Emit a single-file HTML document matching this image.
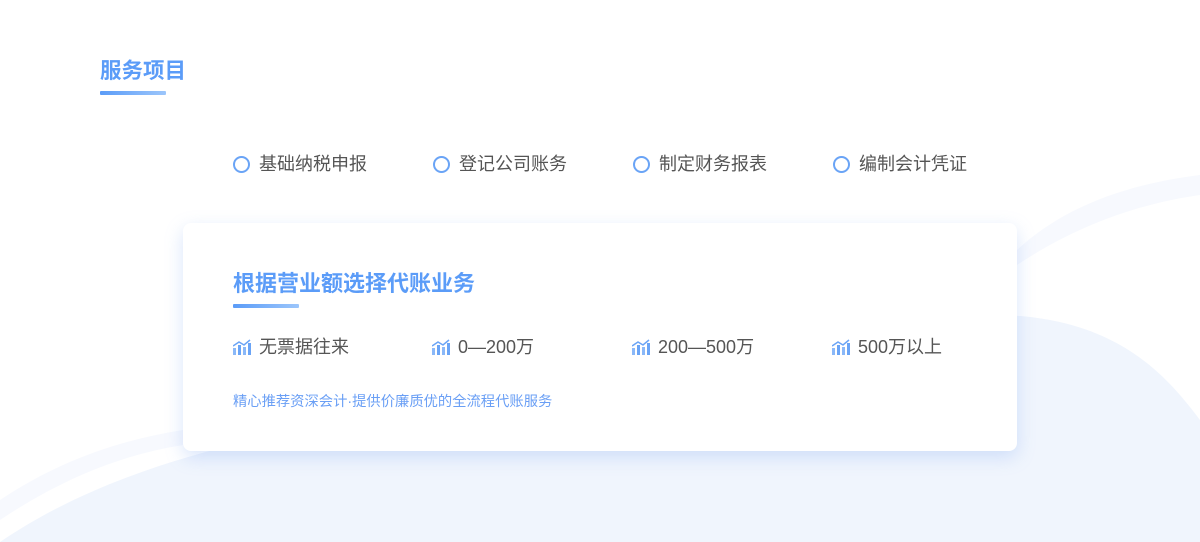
<!DOCTYPE html>
<html><head><meta charset="utf-8"><style>
*{margin:0;padding:0;box-sizing:border-box}
body{width:1200px;height:542px;overflow:hidden;background:#fff;font-family:"Liberation Sans","Noto Sans CJK SC",sans-serif;position:relative}
.bg{position:absolute;left:0;top:0}
.t1{position:absolute;left:100px;top:56px;font-size:21.5px;font-weight:bold;color:#5b9cf8;line-height:30px}
.u{position:absolute;height:4px;background:linear-gradient(90deg,#5b9cf8,#9cc6fb);border-radius:1px}
.it{position:absolute;top:152px;font-size:18px;color:#555;line-height:24px;display:flex;align-items:center}
.it i{width:17px;height:17px;border:2px solid #6aa4f6;border-radius:50%;margin-right:9px;display:inline-block}
.card{position:absolute;left:183px;top:223px;width:834px;height:228px;background:#fff;border-radius:8px;box-shadow:0 6px 18px rgba(120,160,240,.28)}
.t2{position:absolute;left:233px;top:269px;font-size:22px;font-weight:bold;color:#5b9cf8;line-height:30px}
.r{position:absolute;top:335px;font-size:18px;color:#555;line-height:24px;display:flex;align-items:center}
.r svg{margin-right:8px}
.s{position:absolute;left:233px;top:392px;font-size:14.3px;color:#6a9ff5;line-height:20px}
</style></head><body>
<svg class="bg" width="1200" height="542">
<path d="M0 542 C150 440 350 420 600 380 C800 345 950 300 1050 320 C1130 335 1170 380 1200 420 L1200 542Z" fill="#f0f5fd"/>
<path d="M1017 250 C1060 210 1120 185 1200 175 L1200 195 C1130 205 1070 230 1017 265Z" fill="#f7f9fe"/>
<path d="M0 500 C60 460 120 440 183 430 L183 445 C120 455 60 480 0 520Z" fill="#f7f9fe"/>
</svg>
<div class="t1">服务项目</div>
<div class="u" style="left:100px;top:91px;width:66px"></div>
<div class="it" style="left:233px"><i></i>基础纳税申报</div>
<div class="it" style="left:433px"><i></i>登记公司账务</div>
<div class="it" style="left:633px"><i></i>制定财务报表</div>
<div class="it" style="left:833px"><i></i>编制会计凭证</div>
<div class="card"></div>
<div class="t2">根据营业额选择代账业务</div>
<div class="u" style="left:233px;top:304px;width:66px"></div>
<div class="r" style="left:233px"><svg width="18" height="16" viewBox="0 0 18 16"><rect x="0" y="9" width="3" height="7" fill="#8ab8f8"/><rect x="5" y="6" width="3" height="10" fill="#6aa4f6"/><rect x="10" y="8" width="3" height="8" fill="#8ab8f8"/><rect x="15" y="4" width="3" height="12" fill="#6aa4f6"/><path d="M0 7 L6 3 L11 6 L17 1" stroke="#6aa4f6" stroke-width="1.5" fill="none"/></svg>无票据往来</div>
<div class="r" style="left:432px"><svg width="18" height="16" viewBox="0 0 18 16"><rect x="0" y="9" width="3" height="7" fill="#8ab8f8"/><rect x="5" y="6" width="3" height="10" fill="#6aa4f6"/><rect x="10" y="8" width="3" height="8" fill="#8ab8f8"/><rect x="15" y="4" width="3" height="12" fill="#6aa4f6"/><path d="M0 7 L6 3 L11 6 L17 1" stroke="#6aa4f6" stroke-width="1.5" fill="none"/></svg>0—200万</div>
<div class="r" style="left:632px"><svg width="18" height="16" viewBox="0 0 18 16"><rect x="0" y="9" width="3" height="7" fill="#8ab8f8"/><rect x="5" y="6" width="3" height="10" fill="#6aa4f6"/><rect x="10" y="8" width="3" height="8" fill="#8ab8f8"/><rect x="15" y="4" width="3" height="12" fill="#6aa4f6"/><path d="M0 7 L6 3 L11 6 L17 1" stroke="#6aa4f6" stroke-width="1.5" fill="none"/></svg>200—500万</div>
<div class="r" style="left:832px"><svg width="18" height="16" viewBox="0 0 18 16"><rect x="0" y="9" width="3" height="7" fill="#8ab8f8"/><rect x="5" y="6" width="3" height="10" fill="#6aa4f6"/><rect x="10" y="8" width="3" height="8" fill="#8ab8f8"/><rect x="15" y="4" width="3" height="12" fill="#6aa4f6"/><path d="M0 7 L6 3 L11 6 L17 1" stroke="#6aa4f6" stroke-width="1.5" fill="none"/></svg>500万以上</div>
<div class="s">精心推荐资深会计·提供价廉质优的全流程代账服务</div>
</body></html>
